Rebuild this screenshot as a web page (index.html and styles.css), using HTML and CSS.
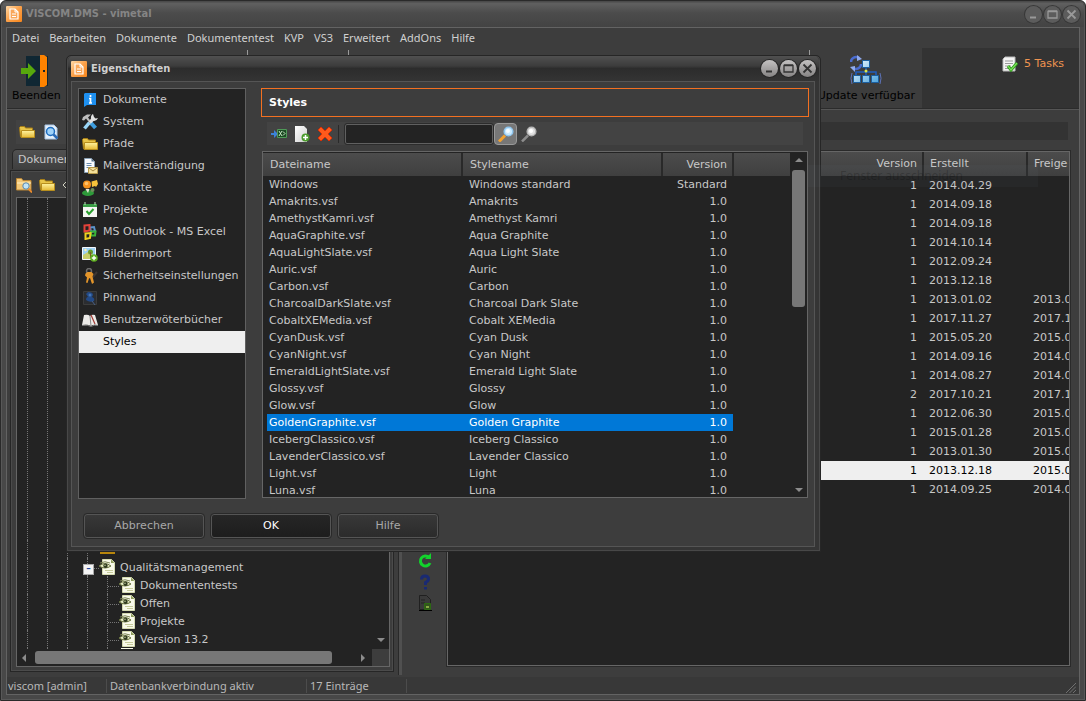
FILE: index.html
```html
<!DOCTYPE html>
<html lang="de">
<head>
<meta charset="utf-8">
<title>VISCOM.DMS - vimetal</title>
<link rel="stylesheet" href="styles.css">
</head>
<body>
<svg class="defs" aria-hidden="true">
  <defs>
    <linearGradient id="gOrange" x1="0" y1="0" x2="1" y2="1"><stop offset="0" stop-color="#ffd9a8"/><stop offset=".5" stop-color="#fba048"/><stop offset="1" stop-color="#f7861c"/></linearGradient>
    <linearGradient id="gFolder" x1="0" y1="0" x2="0" y2="1"><stop offset="0" stop-color="#fff3a0"/><stop offset="1" stop-color="#e6ba35"/></linearGradient>
    <linearGradient id="gBlue" x1="0" y1="0" x2="1" y2="1"><stop offset="0" stop-color="#f2fbff"/><stop offset="1" stop-color="#4da4dd"/></linearGradient>
    <linearGradient id="gPage" x1="0" y1="0" x2="1" y2="1"><stop offset="0" stop-color="#ffffff"/><stop offset="1" stop-color="#cfcfcf"/></linearGradient>
  </defs>
  <symbol id="logo" viewBox="0 0 16 16"><rect width="16" height="16" rx="1" fill="url(#gOrange)"/><path d="M4 3h5l3 3v7H4z" fill="#f9a75a" stroke="#fff" stroke-width="1.2"/><path d="M9 3v3h3M6 8h4M6 10.5h4" fill="none" stroke="#fff"/></symbol>
  <symbol id="folder" viewBox="0 0 16 16"><path d="M.5 3.5l1-1h4l1 1.500h7v9h-12z" fill="#e9c64a" stroke="#a87f16"/><path d="M2.500 6.500h13v7h-13z" fill="url(#gFolder)" stroke="#b88f1e"/></symbol>
  <symbol id="eyepage" viewBox="0 0 16 16"><path d="M3.500.5h9l3 3v12h-12z" fill="#f9faea" stroke="#d5dab0"/><path d="M12 .5v3.500h3.500z" fill="#8f9c5c"/><path d="M6 11.500h8M8 13.500h6" stroke="#c6cb9a"/><path d="M0 7Q5.500 2 12 7Q6 11 0 7z" fill="#e6ebc5" stroke="#69733f"/><circle cx="6.500" cy="6.800" r="2.200" fill="#2f3a1f"/><circle cx="6" cy="6.200" r=".8" fill="#b9c690"/><path d="M1 4Q6 1.500 11 4" fill="none" stroke="#7b8456"/></symbol>
  <symbol id="min" viewBox="0 0 17 17"><path d="M5 11.500h6" stroke="currentColor" stroke-width="2"/></symbol>
  <symbol id="max" viewBox="0 0 17 17"><path d="M4 5.500h9v6.500H4zM4 5h9" fill="none" stroke="currentColor" stroke-width="1.300"/></symbol>
  <symbol id="close" viewBox="0 0 17 17"><path d="M4.500 4.500l8 8M12.500 4.500l-8 8" stroke="currentColor" stroke-width="1.800"/></symbol>
  <symbol id="arrow-u" viewBox="0 0 8 4"><path d="M0 4l4-4 4 4z" fill="#8c8c8c"/></symbol>
  <symbol id="arrow-d" viewBox="0 0 8 4"><path d="M0 0l4 4 4-4z" fill="#8c8c8c"/></symbol>
  <symbol id="arrow-l" viewBox="0 0 4 8"><path d="M4 0L0 4l4 4z" fill="#8c8c8c"/></symbol>
  <symbol id="arrow-r" viewBox="0 0 4 8"><path d="M0 0l4 4-4 4z" fill="#8c8c8c"/></symbol>
</svg>

<div class="window">
  <header class="titlebar">
    <svg class="i16"><use href="#logo"/></svg>
    <h1 class="title">VISCOM.DMS - vimetal</h1>
    <button class="orb dim" aria-label="Minimieren"><svg><use href="#min"/></svg></button>
    <button class="orb dim" aria-label="Maximieren"><svg><use href="#max"/></svg></button>
    <button class="orb dim" aria-label="Schließen"><svg><use href="#close"/></svg></button>
  </header>
  <div class="client">
    <nav class="menu">
      <button>Datei</button><button>Bearbeiten</button><button>Dokumente</button><button>Dokumententest</button><button>KVP</button><button>VS3</button><button>Erweitert</button><button>AddOns</button><button>Hilfe</button>
    </nav>
    <div class="ribbon">
      <button class="big">
        <svg class="i32" viewBox="0 0 32 32"><path d="M6 1h22v30H6z" fill="#102733"/><path d="M20 0h4l3 2v28l-3 2h-4z" fill="#ff8300"/><path d="M23 16h2" stroke="#17242b" stroke-width="2"/><path d="M1 13h7V8l8 8-8 8v-5H1z" fill="#57a80c"/></svg>
        <span>Beenden</span>
      </button>
      <div class="groups"><i></i><i></i><i></i></div>
      <button class="big update">
        <svg class="i32" viewBox="0 0 32 32"><g fill="none" stroke="#4a6cd0" stroke-width="2.500"><path d="M1 7a5 5 0 0 1 8-4M11 9a5 5 0 0 1-8 4"/></g><path d="M7 0l5 4-5 2zM5 17l-5-5 5-1z" fill="#8fabf0"/><path d="M16 12v5M6 20v-3h20v3M16 17v3" fill="none" stroke="#1f5fc0" stroke-width="1.500"/><g fill="url(#gBlue)" stroke="#1b5fa0"><path d="M12.500 5.500h7v7h-7zM3.500 20.500h7v7h-7zM12.500 20.500h7v7h-7zM21.500 20.500h7v7h-7z"/></g><path d="M2 18q-2 5 0 11M30 18q2 5 0 11" fill="none" stroke="#5d73b8"/><circle cx="16" cy="16" r="1.500" fill="#dbe84a"/></svg>
        <span>Update verfügbar</span>
      </button>
      <div class="tasks">
        <svg class="i16" viewBox="0 0 16 16"><path d="M3 1h10v14H1V3z" fill="#f4f4f4" stroke="#bbb"/><path d="M3 5h8M3 7.500h8M3 10h6M3 12.500h5" stroke="#999"/><path d="M6 10l3 4 6-7" fill="none" stroke="#2f9b1c" stroke-width="3"/><path d="M6 10l3 4 6-7" fill="none" stroke="#7be05a" stroke-width="1.200"/></svg>
        <a href="#tasks">5 Tasks</a>
      </div>
    </div>
    <div class="workspace">
      <aside class="left">
        <div class="quick">
          <svg class="i16"><use href="#folder"/></svg>
          <svg class="i16" viewBox="0 0 16 16"><path d="M2 1h9l3 3v11H2z" fill="#e6f1fb" stroke="#a9c6e6"/><circle cx="7.500" cy="7.500" r="4" fill="#9fd3fa" stroke="#1e6dc0" stroke-width="1.500"/><path d="M10.500 10.500L14.500 14.500" stroke="#2b6cb8" stroke-width="2.500"/></svg>
        </div>
        <div class="tabs"><button class="tab">Dokumente</button></div>
        <div class="pane">
          <div class="panebar">
            <svg class="i16" viewBox="0 0 16 16"><path d="M.5 13V1.500h5l1.500 2h8V13z" fill="#f3c878" stroke="#b98534"/><path d="M1 6h14" stroke="#fff0c4"/><circle cx="10" cy="9" r="3.200" fill="#bfe3f8" stroke="#5c87a8"/><path d="M12.500 11.500L16 15.500" stroke="#e88a2c" stroke-width="2"/></svg>
            <svg class="i16"><use href="#folder"/></svg>
            <svg class="i16" viewBox="0 0 16 16"><path d="M4 5L1 8l3 3M8 5L5 8l3 3" fill="none" stroke="#d0d0c0"/></svg>
          </div>
          <div class="tree">
            <div class="treeview">
              <div class="node grow"><i class="g"></i><i class="g"></i><i class="g"></i></div>
              <div class="node"><i class="g"></i><i class="g"></i><i class="g"></i><i class="g n"></i><svg class="i16" viewBox="0 0 16 16"><path d="M1 2h15v11H1z" fill="#b8860b"/></svg></div>
              <div class="node"><i class="g"></i><i class="g"></i><i class="g"></i><i class="g n h box"></i><svg class="i16"><use href="#eyepage"/></svg><span>Qualitätsmanagement</span></div>
              <div class="node"><i class="g"></i><i class="g"></i><i class="g"></i><i class="g"></i><i class="g n h"></i><svg class="i16"><use href="#eyepage"/></svg><span>Dokumententests</span></div>
              <div class="node"><i class="g"></i><i class="g"></i><i class="g"></i><i class="g"></i><i class="g n h"></i><svg class="i16"><use href="#eyepage"/></svg><span>Offen</span></div>
              <div class="node"><i class="g"></i><i class="g"></i><i class="g"></i><i class="g"></i><i class="g n h"></i><svg class="i16"><use href="#eyepage"/></svg><span>Projekte</span></div>
              <div class="node"><i class="g"></i><i class="g"></i><i class="g"></i><i class="g"></i><i class="g n h"></i><svg class="i16"><use href="#eyepage"/></svg><span>Version 13.2</span></div>
              <div class="node sliver"><i class="g"></i><i class="g"></i><i class="g"></i><i class="g"></i><i class="g n"></i><b></b></div>
            </div>
            <div class="vbar"><svg class="av"><use href="#arrow-d"/></svg></div>
            <div class="hbar"><svg class="ah"><use href="#arrow-l"/></svg><div class="hthumb"></div><svg class="ah"><use href="#arrow-r"/></svg></div>
            <div class="corner"></div>
          </div>
        </div>
      </aside>
      <div class="splitter"></div>
      <div class="sidetools">
        <svg class="i16" viewBox="0 0 16 16"><path d="M12 4.500A5 5 0 1 0 13 10" fill="none" stroke="#12d42c" stroke-width="3"/><path d="M8 6h6V0z" fill="#12d42c"/></svg>
        <svg class="i16" viewBox="0 0 16 16"><path d="M4.500 5.500Q4.500 2 8 2t3.500 3Q11.500 7 8.500 8.500v2.500M8.500 13v2.500" fill="none" stroke="#1a2a72" stroke-width="3"/></svg>
        <svg class="i16" viewBox="0 0 16 16"><path d="M2.500.5h7l4 4v10h-11z" fill="#3a3a3a" stroke="#202020"/><path d="M4 5h4M4 8h4" stroke="#222"/><path d="M7.500 8.500h6v6h-6z" fill="#33551c" stroke="#2c6a12"/><path d="M9 12h3" stroke="#88a844" stroke-width="2"/><path d="M2 15.500h13" stroke="#000"/></svg>
      </div>
      <main class="right">
        <div class="strip"></div>
        <div class="grid">
          <table class="docs">
            <colgroup><col><col class="c-v"><col class="c-e"><col class="c-f"></colgroup>
            <thead><tr><th></th><th class="num">Version</th><th>Erstellt</th><th>Freige</th></tr></thead>
            <tbody>
              <tr><td></td><td>1</td><td>2014.04.29</td><td></td></tr>
              <tr><td></td><td>1</td><td>2014.09.18</td><td></td></tr>
              <tr><td></td><td>1</td><td>2014.09.18</td><td></td></tr>
              <tr><td></td><td>1</td><td>2014.10.14</td><td></td></tr>
              <tr><td></td><td>1</td><td>2012.09.24</td><td></td></tr>
              <tr><td></td><td>1</td><td>2013.12.18</td><td></td></tr>
              <tr><td></td><td>1</td><td>2013.01.02</td><td>2013.0</td></tr>
              <tr><td></td><td>1</td><td>2017.11.27</td><td>2017.1</td></tr>
              <tr><td></td><td>1</td><td>2015.05.20</td><td>2015.0</td></tr>
              <tr><td></td><td>1</td><td>2014.09.16</td><td>2014.0</td></tr>
              <tr><td></td><td>1</td><td>2014.08.27</td><td>2014.0</td></tr>
              <tr><td></td><td>2</td><td>2017.10.21</td><td>2017.1</td></tr>
              <tr><td></td><td>1</td><td>2012.06.30</td><td>2015.0</td></tr>
              <tr><td></td><td>1</td><td>2015.01.28</td><td>2015.0</td></tr>
              <tr><td></td><td>1</td><td>2013.01.30</td><td>2015.0</td></tr>
              <tr class="sel"><td></td><td>1</td><td>2013.12.18</td><td>2015.0</td></tr>
              <tr><td></td><td>1</td><td>2014.09.25</td><td>2014.0</td></tr>
            </tbody>
          </table>
        </div>
      </main>
    </div>
    <footer class="status">
      <span class="s1">viscom [admin]</span><span class="s2">Datenbankverbindung aktiv</span><span class="s3">17 Einträge</span>
      <svg class="grip" viewBox="0 0 10 10"><path d="M0 10L10 0M3.500 10L10 3.500M7 10l3-3" stroke="#707070"/></svg>
    </footer>
  </div>
</div>

<section class="dialog" role="dialog" aria-labelledby="dlg-title">
  <header class="titlebar dlgbar">
    <svg class="i16"><use href="#logo"/></svg>
    <h2 class="title" id="dlg-title">Eigenschaften</h2>
    <button class="orb" aria-label="Minimieren"><svg><use href="#min"/></svg></button>
    <button class="orb" aria-label="Maximieren"><svg><use href="#max"/></svg></button>
    <button class="orb" aria-label="Schließen"><svg><use href="#close"/></svg></button>
  </header>
  <div class="dlgbody">
    <nav class="cats">
      <button><svg class="i16" viewBox="0 0 16 16"><path d="M3 1h11v12H5l-3 2V2z" fill="#1e90f0"/><path d="M8.500 3v2M7 6.500h1.500V11M7 11h3" fill="none" stroke="#fff" stroke-width="1.700"/></svg>Dokumente</button>
      <button><svg class="i16" viewBox="0 0 16 16"><path d="M6 7l-4.500 7" stroke="#d8d8d8" stroke-width="0"/><path d="M8.500 8.500l5 5.500" stroke="#3f9fe0" stroke-width="4"/><path d="M7.500 8.500l-5 6" stroke="#9ad6f7" stroke-width="3.500"/><path d="M0 6l1-3 4-2.500h4L6 3.500 9.500 8 8 9.500 4 4.500 2 6.500z" fill="#bdbdbd"/><path d="M11 0q-2.500 1.500-2 4.500L7 7.500l2 2 2.500-2.500q3 .5 4.500-3l-2.500.5-1.500-1.500z" fill="#e2e2e2"/></svg>System</button>
      <button><svg class="i16"><use href="#folder"/></svg>Pfade</button>
      <button><svg class="i16" viewBox="0 0 16 16"><path d="M2.500.5h7l3 3v11h-10z" fill="#fafcff" stroke="#8aa0b4"/><path d="M9.500.5v3h3z" fill="#4f6d88"/><path d="M4.500 5.500h5M4.500 7.500h5M4.500 9.500h3" stroke="#6a8cae"/><path d="M6.500 9.500h9v6h-9z" fill="#f2df9a" stroke="#b79a4c"/><path d="M7 10l4 3 4-3" fill="none" stroke="#a5883e"/></svg>Mailverständigung</button>
      <button><svg class="i16" viewBox="0 0 16 16"><path d="M9.500 1.500L15 0l1 4-2 3-1-1-3 1z" fill="#f6c33c"/><circle cx="5" cy="4.500" r="4" fill="#f6931e"/><circle cx="4.500" cy="3.500" r="1.800" fill="#ffc36a"/><ellipse cx="6" cy="13" rx="6" ry="3" fill="#2e9a3a"/><path d="M3.500 9h4l-1.500 4z" fill="#e8e8d8"/><circle cx="10.500" cy="10" r="2" fill="#6f8f5a"/></svg>Kontakte</button>
      <button><svg class="i16" viewBox="0 0 16 16"><path d="M1 2h14v13H1z" fill="#f6f6f4"/><path d="M1 2h14v3H1z" fill="#3a9c46"/><path d="M3 0v3M13 0v3" stroke="#bfe8c0"/><path d="M4.500 9l2.500 3 4.500-5" fill="none" stroke="#2aa02e" stroke-width="2"/></svg>Projekte</button>
      <button><svg class="i16" viewBox="0 0 16 16"><g fill="none" stroke-width="2"><path d="M8 3.500l4-.5 1 4-4 1z" stroke="#5a94cc"/><path d="M2.500 1.500l5-.5v5.500l-5 1z" stroke="#e3423a"/><path d="M9 7.500h4.500l-.5 4H9z" stroke="#3ab53a"/><path d="M3.500 9.500l5-.5-.5 5-4.500 1z" stroke="#f0d020"/></g></svg>MS Outlook - MS Excel</button>
      <button><svg class="i16" viewBox="0 0 16 16"><path d="M.5 1.500h13v12H.5z" fill="#9fd2f5" stroke="#f4f8fc"/><path d="M1 9l5-3 7 4v3H1z" fill="#c9cf6a"/><circle cx="8.500" cy="6" r="2.500" fill="#6a9a2c"/><path d="M8.500 6v6" stroke="#7a5a2c"/><circle cx="3.500" cy="4" r="1.200" fill="#fff3b0"/><circle cx="12" cy="12" r="3.800" fill="#5cab1e"/><path d="M12 9.800v4.400M9.800 12h4.400" stroke="#fff" stroke-width="1.400"/></svg>Bilderimport</button>
      <button><svg class="i16" viewBox="0 0 16 16"><path d="M10 10l5-6" stroke="#3d3733" stroke-width="2"/><circle cx="7" cy="3" r="2.500" fill="none" stroke="#6c6c6c" stroke-width="1.500"/><path d="M3.500 5.500l2-1.500h4l2 2-1 2.500 1.500 6-2 1.500-2-6-1 .5-1.500 4.500-1.500-.5 1-5-2-2z" fill="#e3952a"/></svg>Sicherheitseinstellungen</button>
      <button><svg class="i16" viewBox="0 0 16 16"><path d="M1.500 1.500h13v13h-13z" fill="#2b2d31" stroke="#3c3c3c"/><path d="M6 2q5 0 5 3l-1 2q3 1 2 4-4 2-8-1 0-3 2-3L4 4z" fill="#234a86"/><path d="M10 11l3 4" stroke="#476088"/><circle cx="8" cy="5" r="1.500" fill="#4474b4"/></svg>Pinnwand</button>
      <button><svg class="i16" viewBox="0 0 16 16"><path d="M2 3q4-1 6 1 2-2 5-1l3 10q-5-1-7 1-3-2-9-1z" fill="#ecebe8"/><path d="M8 4l1 10" stroke="#888"/><path d="M9 3l4 9" stroke="#a33b34" stroke-width="1.200"/><path d="M0 13.500q6-1 9 1 3-2 7-1" fill="none" stroke="#777"/></svg>Benutzerwöterbücher</button>
      <button class="active"><span class="i16"></span>Styles</button>
    </nav>
    <div class="page">
      <h3 class="pagehead">Styles</h3>
      <div class="tools">
        <button class="tool" aria-label="Importieren"><svg class="i16" viewBox="0 0 16 16"><path d="M0 7h3V4l4 4-4 4V9H0z" fill="#3c82d8"/><path d="M6.500 3.500h9v8h-9z" fill="#1c4a24" stroke="#4f9a58"/><path d="M8 5l3 5M11 5l-3 5M12 5.500l2 2-2 2" stroke="#c7e6c4" fill="none"/></svg></button>
        <button class="tool" aria-label="Neu"><svg class="i16" viewBox="0 0 16 16"><path d="M1 0h9l3 3v13H1z" fill="url(#gPage)"/><circle cx="11.500" cy="11.500" r="4" fill="#4c9c2e"/><path d="M11.500 9v5M9 11.500h5" stroke="#fff" stroke-width="1.500"/></svg></button>
        <button class="tool" aria-label="Löschen"><svg class="i16" viewBox="0 0 16 16"><path d="M4 1l4 4 4-4 3 3-4 4 4 4-3 3-4-4-4 4-3-3 4-4-4-4z" fill="#ff5a1c" stroke="#d92f06"/></svg></button>
        <span class="sep"></span>
        <input class="search" type="text" aria-label="Suche">
        <button class="tool on" aria-label="Suchen"><svg class="i16" viewBox="0 0 16 16"><path d="M1 15.500l6-6" stroke="#f2a230" stroke-width="3"/><circle cx="10.500" cy="5.500" r="4.300" fill="#cbeaff" stroke="#8fc6ee" stroke-width="1.500"/><circle cx="10" cy="5" r="2" fill="#f5fcff"/></svg></button>
        <button class="tool" aria-label="Suche zurücksetzen"><svg class="i16" viewBox="0 0 16 16"><path d="M1 15.500l6-6" stroke="#8d8d8d" stroke-width="2.500"/><circle cx="10.500" cy="5.500" r="4.300" fill="#e2e2e2" stroke="#b5b5b5" stroke-width="1.500"/><circle cx="10" cy="5" r="2" fill="#fff"/></svg></button>
      </div>
      <div class="stylebox">
        <div class="stylescroll">
          <table class="styles">
            <colgroup><col class="w1"><col class="w2"><col class="w3"><col></colgroup>
            <thead><tr><th>Dateiname</th><th>Stylename</th><th class="num">Version</th><th></th></tr></thead>
            <tbody>
              <tr><td>Windows</td><td>Windows standard</td><td>Standard</td></tr>
              <tr><td>Amakrits.vsf</td><td>Amakrits</td><td>1.0</td></tr>
              <tr><td>AmethystKamri.vsf</td><td>Amethyst Kamri</td><td>1.0</td></tr>
              <tr><td>AquaGraphite.vsf</td><td>Aqua Graphite</td><td>1.0</td></tr>
              <tr><td>AquaLightSlate.vsf</td><td>Aqua Light Slate</td><td>1.0</td></tr>
              <tr><td>Auric.vsf</td><td>Auric</td><td>1.0</td></tr>
              <tr><td>Carbon.vsf</td><td>Carbon</td><td>1.0</td></tr>
              <tr><td>CharcoalDarkSlate.vsf</td><td>Charcoal Dark Slate</td><td>1.0</td></tr>
              <tr><td>CobaltXEMedia.vsf</td><td>Cobalt XEMedia</td><td>1.0</td></tr>
              <tr><td>CyanDusk.vsf</td><td>Cyan Dusk</td><td>1.0</td></tr>
              <tr><td>CyanNight.vsf</td><td>Cyan Night</td><td>1.0</td></tr>
              <tr><td>EmeraldLightSlate.vsf</td><td>Emerald Light Slate</td><td>1.0</td></tr>
              <tr><td>Glossy.vsf</td><td>Glossy</td><td>1.0</td></tr>
              <tr><td>Glow.vsf</td><td>Glow</td><td>1.0</td></tr>
              <tr class="sel"><td>GoldenGraphite.vsf</td><td>Golden Graphite</td><td>1.0</td></tr>
              <tr><td>IcebergClassico.vsf</td><td>Iceberg Classico</td><td>1.0</td></tr>
              <tr><td>LavenderClassico.vsf</td><td>Lavender Classico</td><td>1.0</td></tr>
              <tr><td>Light.vsf</td><td>Light</td><td>1.0</td></tr>
              <tr><td>Luna.vsf</td><td>Luna</td><td>1.0</td></tr>
            </tbody>
          </table>
        </div>
        <div class="sbar"><svg class="av"><use href="#arrow-u"/></svg><div class="sthumb"></div><svg class="av end"><use href="#arrow-d"/></svg></div>
      </div>
    </div>
    <div class="actions">
      <button class="btn">Abbrechen</button><button class="btn primary">OK</button><button class="btn short">Hilfe</button>
    </div>
  </div>
</section>
<div class="ghost">Fenster ausschneiden</div>
</body>
</html>
```
FILE: styles.css
```css
* { box-sizing: border-box; }
html, body { height: 100%; }
body { margin: 0; background: #fff; color: #c8c8c8; font: 11px/16px "DejaVu Sans", sans-serif; overflow: hidden; position: relative; }
button { font: inherit; color: inherit; background: none; border: 0; padding: 0; text-align: left; }
h1, h2, h3 { margin: 0; font-size: 11px; }
.defs { position: absolute; width: 0; height: 0; }
.i16 { width: 16px; height: 16px; flex: none; display: block; }
.i32 { width: 32px; height: 32px; display: block; }

.window { height: 100%; display: flex; flex-direction: column; background: #484848; border: 1px solid #2a2a2a; border-radius: 6px 6px 0 0; padding: 0 5px 5px; box-shadow: inset 0 0 0 1px #585858; }
.titlebar { height: 26px; flex: none; display: flex; align-items: center; gap: 2px; margin: 0 -4px; padding: 0 4px; background: linear-gradient(#464646, #606060 10%, #4c4c4c 45%, #434343); border-radius: 6px 6px 0 0; color: #858585; }
.title { font: bold 11px/16px "DejaVu Sans Condensed", sans-serif; flex: 1; margin-left: 2px; }
.orb { width: 17px; height: 17px; border-radius: 50%; background: linear-gradient(#c4c2c2, #858383); color: #333; box-shadow: 0 0 0 1px #262626; }
.orb svg { width: 17px; height: 17px; display: block; }
.orb.dim { background: #5c5c5c; color: #999; box-shadow: 0 0 0 1px #383838; }
.client { flex: 1; min-height: 0; display: flex; flex-direction: column; border: 1px solid #636363; background: #3d3d3d; }

.menu { height: 20px; flex: none; display: flex; align-items: center; gap: 10px; padding-left: 5px; font: 11px/18px "Noto Sans", sans-serif; color: #d0d0d0; }
.ribbon { height: 61px; flex: none; display: flex; border-bottom: 1px solid #2b2b2b; }
.big { display: flex; flex-direction: column; align-items: center; padding: 7px 5px 0; color: #000; gap: 1px; white-space: nowrap; }
.big.update { padding: 7px 7px 0 3px; }
.groups { flex: 1; display: flex; padding: 2px 0 0 181px; gap: 100px; }
.groups i { width: 1px; height: 58px; background: #999; }
.groups i:last-child { margin-left: auto; margin-right: 5px; }
.tasks { width: 157px; background: #333; display: flex; gap: 6px; justify-content: flex-end; padding: 8px 15px 0 0; }
.tasks a { color: #ef9350; text-decoration: none; }
.workspace { flex: 1; min-height: 0; display: flex; border-top: 1px solid #555; }

.left { width: 387px; flex: none; display: flex; flex-direction: column; padding: 0 0 5px 3px; }
.quick { height: 24px; margin: 10px 0 5px 6px; display: flex; align-items: center; gap: 8px; padding-left: 3px; background: #424242; }
.tabs { height: 21px; flex: none; padding-left: 2px; }
.tab { height: 20px; width: 90px; border: 1px solid #262626; border-bottom: 0; border-radius: 5px 5px 0 0; background: linear-gradient(#515151, #3f3f3f); padding-left: 5px; }
.pane { flex: 1; min-height: 0; border: 1px solid #262626; box-shadow: inset 0 0 0 1px #4b4b4b; padding: 1px 3px 4px 5px; display: flex; flex-direction: column; }
.panebar { height: 25px; flex: none; display: flex; align-items: center; gap: 7px; }
.tree { flex: 1; min-height: 0; border: 1px solid #666; background: #232323; display: grid; grid-template: minmax(0, 1fr) 17px / minmax(0, 1fr) 17px; }
.treeview { display: flex; flex-direction: column; overflow: hidden; padding-left: 10px; }
.node { height: 18px; flex: none; display: flex; align-items: center; }
.node.grow { height: auto; flex: 1; }
.node.sliver { height: 1px; overflow: hidden; }
.node.sliver b { width: 12px; height: 1px; background: #f7f8e6; margin-left: 2px; }
.g { width: 20px; align-self: stretch; border-left: 1px dotted #757575; position: relative; }
.g.n { width: 12px; }
.g.h::after { content: ""; position: absolute; left: 0; right: 0; top: 10px; border-top: 1px dotted #757575; }
.g.box::before { content: "–"; position: absolute; z-index: 1; left: -5px; top: 6px; width: 9px; height: 9px; background: #f4f4f4; border: 1px solid #aaa; color: #22479b; font: bold 9px/6px "DejaVu Sans", sans-serif; text-align: center; }
.node span { margin-left: 5px; line-height: 18px; padding-top: 1px; white-space: nowrap; }
.vbar { display: flex; justify-content: center; align-items: flex-end; padding-bottom: 7px; }
.av { width: 8px; height: 4px; flex: none; }
.ah { width: 4px; height: 8px; flex: none; }
.hbar { display: flex; align-items: center; padding: 0 7px 0 5px; gap: 9px; }
.hthumb { height: 13px; flex: 1; margin-right: 20px; border-radius: 3px; background: #777; }
.corner { background: #3d3d3d; }
.splitter { width: 8px; flex: none; margin-bottom: 2px; border-right: 3px solid #505050; box-shadow: inset -1px 0 #292929; }
.sidetools { width: 45px; flex: none; display: flex; flex-direction: column; align-items: center; justify-content: flex-end; gap: 5px; padding-bottom: 66px; }
.right { flex: 1; min-width: 0; display: flex; flex-direction: column; padding: 12px 9px 11px 0; }
.strip { height: 18px; flex: none; background: #333; margin-bottom: 11px; margin-right: 2px; }
.grid { flex: 1; min-height: 0; overflow: hidden; border: 1px solid #666; box-shadow: 0 0 0 1px #2a2a2a; background: #232323; }
table { width: 100%; table-layout: fixed; border-collapse: separate; border-spacing: 0; }
th { font-weight: normal; text-align: left; background: linear-gradient(#4c4c4c, #3f3f3f); border-right: 2px solid #292929; padding: 0 5px 0 6px; overflow: hidden; white-space: nowrap; }
th.num { text-align: right; }
th:last-child { border-right: 0; }
td { padding: 0; overflow: hidden; white-space: nowrap; }
.docs th { height: 24px; }
.docs td { height: 19px; line-height: 19px; padding-left: 5px; }
.docs td:nth-child(2) { text-align: right; padding-right: 7px; }
.c-v { width: 103px; }
.c-e { width: 104px; }
.c-f { width: 41px; }
.docs .sel td { background: #efefef; color: #000; }

.status { height: 17px; flex: none; background: #383838; display: flex; align-items: center; font: 11px/16px "Noto Sans", sans-serif; color: #b8b8b8; white-space: nowrap; }
.status span { border-right: 1px solid #4c4c4c; padding-left: 1px; line-height: 14px; }
.s1 { width: 100px; }
.s2 { width: 200px; }
.s2, .s3 { text-indent: 2px; }
.s3 { width: 100px; }
.grip { width: 10px; height: 10px; margin: 4px 3px 0 auto; }

.dialog { position: absolute; left: 66px; top: 55px; right: 265px; bottom: 149px; display: flex; flex-direction: column; background: #353535; border: 1px solid #262626; border-radius: 5px 5px 0 0; box-shadow: inset 0 0 0 1px #484848; padding: 0 5px 4px 4px; }
.dlgbar { height: 25px; margin: 0 -4px 0 -3px; background: linear-gradient(#505050, #3c3c3c 40%, #2c2c2c 50%, #343434); color: #d0d0d0; border-radius: 5px 5px 0 0; padding: 0 3px; }
.dlgbody { flex: 1; min-height: 0; border: 1px solid #555; background: #3d3d3d; display: grid; grid-template: minmax(0, 1fr) 47px / 168px minmax(0, 1fr); column-gap: 15px; padding: 6px 5px 0 6px; }
.cats { border: 1px solid #606060; background: #232323; display: flex; flex-direction: column; overflow: hidden; }
.cats button { height: 22px; flex: none; display: flex; align-items: center; gap: 5px; padding-left: 3px; white-space: nowrap; }
.cats .active { background: #efefef; color: #000; }
.page { display: flex; flex-direction: column; min-width: 0; min-height: 0; }
.pagehead { height: 29px; flex: none; border: 1px solid #f37021; color: #fff; line-height: 27px; padding-left: 7px; }
.tools { height: 23px; flex: none; margin: 5px 6px 6px; display: flex; align-items: center; background: #434343; }
.tool { width: 23px; height: 22px; flex: none; display: grid; place-items: center; border-radius: 4px; }
.tool.on { background: #777; border: 1px solid #999; }
.sep { width: 1px; height: 18px; background: #2a2a2a; margin: 0 6px 0 2px; }
.search { width: 148px; height: 20px; border: 1px solid #606060; border-radius: 2px; background: #232323; color: #ccc; font: inherit; padding: 0 4px; margin-right: 1px; outline: 1px solid #2c2c2c; }
.stylebox { flex: 1; min-height: 0; border: 1px solid #666; background: #232323; display: flex; margin: 0 1px 1px; padding-top: 1px; }
.stylescroll { flex: 1; min-width: 0; overflow: hidden; }
.styles th { height: 23px; padding-left: 7px; }
.styles td { height: 17px; line-height: 17px; padding-left: 6px; }
.styles td:first-child { border-left: 4px solid #232323; padding-left: 2px; }
.styles td:nth-child(3) { text-align: right; padding-right: 6px; border-right: 1px solid #232323; }
.w1 { width: 200px; }
.w2 { width: 200px; }
.w3 { width: 71px; }
.styles .sel td { background: #0078d7; color: #fff; }
.sbar { width: 17px; flex: none; display: flex; flex-direction: column; align-items: center; padding: 5px 0; }
.sthumb { width: 13px; height: 137px; margin-top: 8px; border-radius: 3px; background: #777; }
.end { margin-top: auto; }
.actions { grid-column: 1 / -1; display: flex; align-items: flex-start; gap: 7px; padding: 15px 0 0 6px; }
.btn { width: 120px; height: 24px; border: 1px solid #555; outline: 1px solid #292929; border-radius: 3px; background: linear-gradient(#383838, #2b2b2b); color: #a8a8a8; text-align: center; }
.btn.primary { background: linear-gradient(#262626, #1d1d1d); color: #fff; }
.btn.short { width: 100px; }

.ghost { position: absolute; left: 808px; top: 165px; width: 230px; height: 22px; padding-left: 32px; background: rgba(120, 130, 150, .06); color: rgba(0, 0, 0, .2); font: 12px/22px "Noto Sans", sans-serif; pointer-events: none; }
```
